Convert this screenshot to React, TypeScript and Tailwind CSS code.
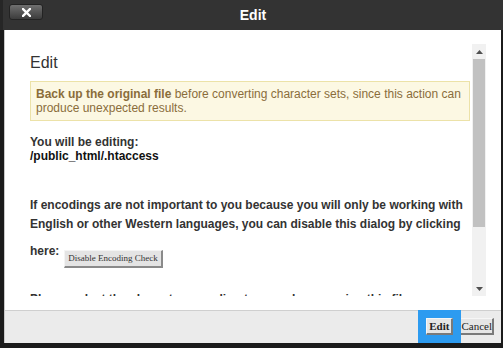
export default function App() {
  return (
    <div className="w-[503px] h-[348px] bg-[#1b1b1b] flex flex-col overflow-hidden font-['Liberation_Sans',Arial,sans-serif]">
      <header className="relative h-[30px] shrink-0 bg-[#333] flex items-center justify-center border-l-[3px] border-[#262626]">
        <button
          type="button"
          className="absolute left-[6px] top-[4px] w-[34px] h-[16px] rounded-[3px] bg-gradient-to-b from-[#707070] to-[#3c3c3c] border border-[#232323] flex items-center justify-center"
        >
          <svg width="9" height="9" viewBox="0 0 9 9">
            <path d="M1 1L8 8M8 1L1 8" stroke="white" strokeWidth="2.4" strokeLinecap="square" />
          </svg>
        </button>
        <h1 className="text-white font-bold text-[14px] leading-none">Edit</h1>
      </header>

      <div className="flex-1 min-h-0 ml-[4px] mr-[2px] mb-[5px] flex flex-col bg-white border-l border-[#c8c8c8]">
        <div className="flex-1 min-h-0 flex pt-[14px] pb-[14px] pl-[13px] pr-[15px]">
          <div className="flex-1 overflow-hidden pl-[12px] pr-[2px] text-[#333]">
            <h2 className="mt-[10px] text-[16px] leading-[18px]">Edit</h2>

            <div className="mt-[9px] border border-[#ece2a8] bg-[#fcf8e3] px-[5px] py-[5px] text-[12px] leading-[14px] text-[#8a6d3b]">
              <strong>Back up the original file</strong> before converting character sets, since this
              action can produce unexpected results.
            </div>

            <p className="mt-[14px] text-[12px] leading-[14px] font-bold">
              You will be editing:
              <br />
              <span className="text-[#111]">/public_html/.htaccess</span>
            </p>

            <p className="mt-[33px] text-[12px] leading-[19px] font-bold">
              If encodings are not important to you because you will only be working with English or
              other Western languages, you can disable this dialog by clicking
            </p>

            <div className="mt-[8px] flex items-start text-[12px] leading-[19px] font-bold">
              <span>here:</span>
              <button
                type="button"
                className="ml-[5px] mt-[8px] h-[18px] px-[3px] bg-[#e4e4e4] border border-t-[#f4f4f4] border-l-[#f4f4f4] border-r-2 border-b-2 border-r-[#8a8a8a] border-b-[#8a8a8a] font-['Liberation_Serif',serif] font-normal text-[9px] leading-none text-[#333]"
              >
                Disable Encoding Check
              </button>
            </div>

            <p className="mt-[22px] text-[12px] leading-[19px] font-bold">
              Please select the character encoding to use when opening this file:
            </p>
            <select className="mt-[6px] h-[20px] w-[200px] border border-[#aaa] text-[12px]">
              <option>utf-8</option>
            </select>
          </div>

          <div className="w-[14px] shrink-0 flex flex-col bg-[#f1f1f1]">
            <div className="h-[15px] flex items-center justify-center">
              <svg width="7" height="4" viewBox="0 0 7 4">
                <path d="M3.5 0L7 4H0Z" fill="#505050" />
              </svg>
            </div>
            <div className="h-[168px] mx-[1px] bg-[#c1c1c1]" />
            <div className="flex-1" />
            <div className="h-[15px] flex items-center justify-center">
              <svg width="7" height="4" viewBox="0 0 7 4">
                <path d="M0 0H7L3.5 4Z" fill="#505050" />
              </svg>
            </div>
          </div>
        </div>

        <footer className="h-[33px] shrink-0 bg-[#ebebeb] border-t border-[#cfcfcf] flex items-center justify-end gap-[7px] pr-[7px] pb-[1px]">
          <button
            type="button"
            className="relative z-10 h-[17px] px-[2px] bg-[#e6e6e6] border border-t-[#f6f6f6] border-l-[#f6f6f6] border-r-2 border-b-2 border-r-[#7a7a7a] border-b-[#7a7a7a] outline-[8px] outline-solid outline-[#2d9bf0] font-['Liberation_Serif',serif] font-bold text-[11px] leading-none text-[#222]"
          >
            Edit
          </button>
          <button
            type="button"
            className="h-[17px] px-0 bg-[#e6e6e6] border border-t-[#f6f6f6] border-l-[#f6f6f6] border-r-2 border-b-2 border-r-[#7a7a7a] border-b-[#7a7a7a] font-['Liberation_Serif',serif] text-[11px] leading-none text-[#222]"
          >
            Cancel
          </button>
        </footer>
      </div>
    </div>
  );
}
